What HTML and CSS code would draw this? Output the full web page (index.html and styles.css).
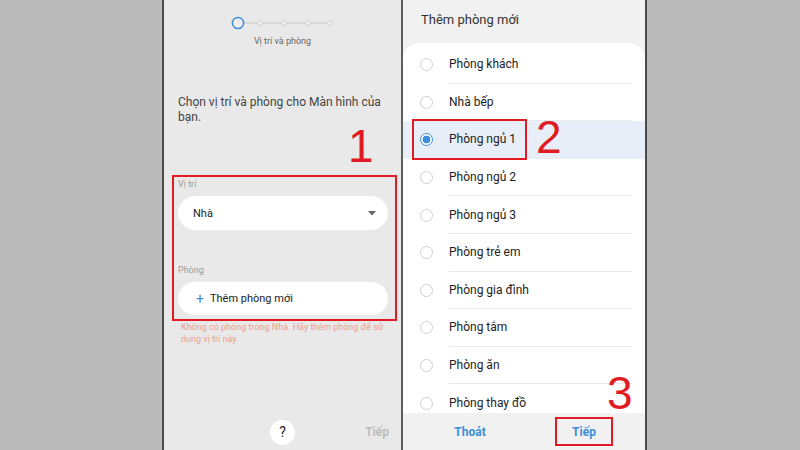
FILE: index.html
```html
<!DOCTYPE html>
<html>
  <head>
    <title>Thêm phòng</title>
    <link rel="stylesheet" href="styles.css">
  </head>
  <body>
    <div class="screens">
      <div class="phone phone-left">
        <div class="stepper">
          <svg width="106" height="14" viewBox="0 0 106 14">
            <line x1="13" y1="7" x2="100" y2="7" stroke="#d2d2d2" stroke-width="1.5" />
            <circle cx="7" cy="7" r="5.6" fill="#ececec" stroke="#3d8fe0" stroke-width="1.5" />
            <circle cx="29" cy="7" r="2.6" fill="#ececec" stroke="#d2d2d2" stroke-width="1" />
            <circle cx="53" cy="7" r="2.6" fill="#ececec" stroke="#d2d2d2" stroke-width="1" />
            <circle cx="77" cy="7" r="2.6" fill="#ececec" stroke="#d2d2d2" stroke-width="1" />
            <circle cx="99" cy="7" r="2.6" fill="#ececec" stroke="#d2d2d2" stroke-width="1" />
          </svg>
        </div>
        <div class="step-label">Vị trí và phòng</div>
        <p class="intro">Chọn vị trí và phòng cho Màn hình của<br />bạn.</p>

        <div class="fields mark">
          <div class="field-label">Vị trí</div>
          <div class="pill">
            <span>Nhà</span>
            <svg class="caret" width="8" height="5" viewBox="0 0 8 5"><path d="M0 0h8L4 4.5z" fill="#666" /></svg>
          </div>
          <div class="field-label field-gap">Phòng</div>
          <div class="pill pill-add">
            <span class="plus">+</span>
            <span>Thêm phòng mới</span>
          </div>
        </div>
        <p class="error">Không có phòng trong Nhà. Hãy thêm phòng để sử<br />dụng vị trí này.</p>

        <div class="footer">
          <span></span>
          <span class="help">?</span>
          <span class="next-off">Tiếp</span>
        </div>
        <span class="num num-1">1</span>
      </div>

      <div class="phone phone-right">
        <div class="sheet-title">Thêm phòng mới</div>
        <ul class="rooms">
          <li class="room"><span class="radio"></span><span class="room-name">Phòng khách</span></li>
          <li class="room"><span class="radio"></span><span class="room-name">Nhà bếp</span></li>
          <li class="room selected"><span class="radio"></span><span class="room-name">Phòng ngủ 1</span><span class="room-mark"></span></li>
          <li class="room"><span class="radio"></span><span class="room-name">Phòng ngủ 2</span></li>
          <li class="room"><span class="radio"></span><span class="room-name">Phòng ngủ 3</span></li>
          <li class="room"><span class="radio"></span><span class="room-name">Phòng trẻ em</span></li>
          <li class="room"><span class="radio"></span><span class="room-name">Phòng gia đình</span></li>
          <li class="room"><span class="radio"></span><span class="room-name">Phòng tắm</span></li>
          <li class="room"><span class="radio"></span><span class="room-name">Phòng ăn</span></li>
          <li class="room"><span class="radio"></span><span class="room-name">Phòng thay đồ</span></li>
        </ul>
        <div class="actions">
          <span class="action">Thoát</span>
          <span class="action"><span class="action-box mark">Tiếp</span></span>
        </div>
        <span class="num num-2">2</span>
        <span class="num num-3">3</span>
      </div>
    </div>
  </body>
</html>
```
FILE: styles.css
```css
body {
  margin: 0;
  background-color: #bababa;
  font-family: Roboto, "Liberation Sans", sans-serif;
}
.screens {
  display: flex;
  height: 450px;
  padding-left: 162px;
}
.phone {
  position: relative;
  height: 450px;
  overflow: hidden;
  display: flex;
  flex-direction: column;
}
.phone-left {
  width: 237px;
  background-color: #e9e9e9;
  border-left: 2px solid #4a4a4a;
  border-right: 2px solid #5e5e5e;
}
.phone-right {
  width: 242px;
  background-color: #f1f1f1;
  border-right: 2px solid #4a4a4a;
}

/* left screen */
.stepper {
  display: flex;
  justify-content: center;
  margin-top: 16px;
  height: 14px;
  padding-left: 2px;
}
.step-label {
  margin-top: 6px;
  text-align: center;
  font-size: 9px;
  line-height: 11px;
  color: #666;
}
.intro {
  margin: 48px 0 0;
  padding: 0 0 0 14px;
  font-size: 12px;
  line-height: 15px;
  color: #444;
  white-space: nowrap;
}
.mark {
  border: 2px solid #e01b24;
}
.fields {
  margin: 50px 0 0 8px;
  width: 225px;
  padding: 2px 7px 3px 4px;
  box-sizing: border-box;
  height: 146px;
}
.field-label {
  font-size: 9px;
  line-height: 10px;
  color: #999;
}
.field-gap {
  margin-top: 35px;
}
.pill {
  margin-top: 7px;
  height: 34px;
  border-radius: 17px;
  background-color: #fff;
  display: flex;
  align-items: center;
  padding: 0 12px 0 15px;
  font-size: 11px;
  color: #222;
}
.pill .caret {
  margin-left: auto;
}
.pill-add {
  height: 33px;
  padding-left: 18px;
}
.plus {
  color: #3d8fe0;
  font-size: 14px;
  margin-right: 6px;
}
.error {
  margin: 0;
  padding: 0 10px 0 17px;
  font-size: 9px;
  line-height: 12px;
  color: #e9a08e;
}
.footer {
  margin-top: auto;
  height: 36px;
  display: grid;
  grid-template-columns: 1fr auto 1fr;
  align-items: center;
  padding: 0 12px;
}
.help {
  width: 25px;
  height: 25px;
  border-radius: 50%;
  background-color: #fff;
  display: flex;
  align-items: center;
  justify-content: center;
  font-size: 14px;
  color: #222;
}
.next-off {
  justify-self: end;
  font-size: 12px;
  font-weight: bold;
  color: #bdbdbd;
}
.num {
  position: absolute;
  font-family: "Liberation Sans", Arial, sans-serif;
  font-size: 46px;
  line-height: 46px;
  color: #e01b24;
}
.num-1 {
  left: 184px;
  top: 123px;
}

/* right screen */
.sheet-title {
  height: 43px;
  line-height: 40px;
  padding-left: 18px;
  font-size: 13px;
  color: #333;
}
.rooms {
  list-style: none;
  margin: 0;
  padding: 3px 0 0;
  height: 367px;
  background-color: #fff;
  border-radius: 16px 16px 0 0;
  overflow: hidden;
}
.room {
  position: relative;
  height: 37.6px;
  display: flex;
  align-items: center;
  padding-left: 17px;
}
.radio {
  width: 11px;
  height: 11px;
  border-radius: 50%;
  border: 1.5px solid #cfcfcf;
  margin-right: 16px;
  flex-shrink: 0;
}
.room-name {
  flex: 1;
  align-self: stretch;
  display: flex;
  align-items: center;
  margin-right: 13px;
  border-bottom: 1px solid #e8e8e8;
  font-size: 12px;
  color: #222;
}
.selected {
  background-color: #e7eef7;
}
.selected .room-name {
  border-bottom-color: transparent;
}
.selected .radio {
  border-color: #3d8fe0;
  background: radial-gradient(circle, #3d8fe0 0 3.6px, #fff 4.2px);
}
.room-mark {
  position: absolute;
  left: 9px;
  top: -2px;
  width: 111px;
  height: 37px;
  border: 2px solid #e01b24;
}
.actions {
  height: 37px;
  display: grid;
  grid-template-columns: 1fr 1fr;
  padding: 0 4px 0 10px;
  background-color: #f1f1f1;
}
.action {
  display: flex;
  align-items: center;
  justify-content: center;
  font-size: 12px;
  font-weight: bold;
  color: #3d8fd8;
}
.action-box {
  width: 54px;
  height: 25px;
  display: flex;
  align-items: center;
  justify-content: center;
}
.num-2 {
  left: 133px;
  top: 114px;
}
.num-3 {
  left: 204px;
  top: 370px;
}
```
